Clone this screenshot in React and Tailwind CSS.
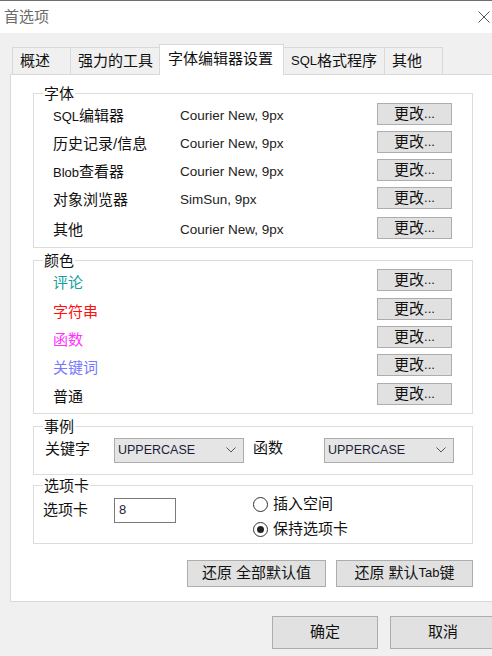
import React from 'react';

const L = ({ children, className = '' }) => <span className={`text-[13px] ${className}`}>{children}</span>;

function Btn({ children, className = '' }) {
  return (
    <div className={`flex items-center justify-center bg-[#e1e1e1] border border-[#adadad] text-[#111] ${className}`}>
      {children}
    </div>
  );
}

function ChangeBtn({ focused }) {
  return (
    <Btn className={`w-[75px] h-[22px] ${focused ? 'border-[#9aa7b6]' : ''}`}>
      更改<L>...</L>
    </Btn>
  );
}

function Group({ title, className = '', children }) {
  return (
    <div className={`relative border border-[#dcdcdc] ${className}`}>
      <span className="absolute left-[9px] top-[-10px] bg-white px-[1px] leading-[20px] text-[#111]">{title}</span>
      {children}
    </div>
  );
}

function Select() {
  return (
    <div className="w-[130px] h-[25px] flex items-center justify-between bg-[#e5e5e5] border border-[#acacac] pl-[3px] pr-[7px]">
      <span className="text-[12.5px] text-[#1b2238]">UPPERCASE</span>
      <svg width="10" height="6" viewBox="0 0 10 6">
        <path d="M0.5 0.5 L5 5 L9.5 0.5" fill="none" stroke="#555" strokeWidth="1" />
      </svg>
    </div>
  );
}

function Radio({ checked, label }) {
  return (
    <div className="h-[25px] flex items-center gap-[5px]">
      <div className="w-[15px] h-[15px] rounded-full border border-[#333] bg-white flex items-center justify-center">
        {checked && <div className="w-[7px] h-[7px] rounded-full bg-[#222]" />}
      </div>
      <span>{label}</span>
    </div>
  );
}

const fonts = [
  { label: <><L>SQL</L>编辑器</>, value: 'Courier New, 9px' },
  { label: <>历史记录/信息</>, value: 'Courier New, 9px' },
  { label: <><L>Blob</L>查看器</>, value: 'Courier New, 9px' },
  { label: <>对象浏览器</>, value: 'SimSun, 9px' },
  { label: <>其他</>, value: 'Courier New, 9px' },
];

const colors = [
  { label: '评论', color: 'text-[#12a0a0]' },
  { label: '字符串', color: 'text-[#ff1010]' },
  { label: '函数', color: 'text-[#ff33ff]' },
  { label: '关键词', color: 'text-[#7878ff]' },
  { label: '普通', color: 'text-[#111]' },
];

const tabs = [
  { label: '概述', w: 'w-[59px]' },
  { label: '强力的工具', w: 'w-[90px]' },
  { label: '字体编辑器设置', w: 'w-[125px]', active: true },
  { label: <><L>SQL</L>格式程序</>, w: 'w-[102px]' },
  { label: '其他', w: 'w-[59px]' },
];

export default function App() {
  return (
    <div className="w-[492px] h-[656px] overflow-hidden bg-[#f0f0f0] text-[15px] text-[#111] font-['Liberation_Sans','Noto_Sans_CJK_SC',sans-serif]">
      {/* title bar */}
      <div className="h-[33px] bg-white border-t border-[#6e6e6e] flex items-center justify-between pl-[4px] pr-[2px]">
        <span className="text-[#6b6b6b]">首选项</span>
        <svg width="12" height="12" viewBox="0 0 12 12">
          <path d="M0.5 0.5 L11.5 11.5 M11.5 0.5 L0.5 11.5" stroke="#555" strokeWidth="1" />
        </svg>
      </div>

      <div className="pl-[10px] pt-[11px]">
        {/* tabs */}
        <div className="flex items-end pl-[2px] h-[30px]">
          {tabs.map((t, i) => (
            <div
              key={i}
              className={`${t.w} ${i > 0 ? '-ml-[1px]' : ''} flex items-center pl-[7px] border-t border-l border-r border-[#d9d9d9] whitespace-nowrap ${
                t.active ? 'relative z-10 h-[31px] -mb-[1px] bg-white pl-[8px] pb-[1px]' : 'h-[27px] bg-[#f0f0f0]'
              }`}
            >
              {t.label}
            </div>
          ))}
        </div>

        {/* panel */}
        <div className="w-[500px] h-[528px] bg-white border border-[#d9d9d9] pl-[22px] pt-[18px]">
          <div className="w-[440px] flex flex-col">
            <Group title="字体" className="pt-[9px] pb-[8px]">
              <div className="flex flex-col">
                {fonts.map((f, i) => (
                  <div key={i} className={`h-[22px] flex items-center pl-[19px] ${i === 0 ? '' : i === 4 ? 'mt-[8px]' : 'mt-[6px]'}`}>
                    <span className="w-[127px] pt-[4px] whitespace-nowrap">{f.label}</span>
                    <span className="w-[197px] pt-[4px] text-[13.5px] text-[#222]">{f.value}</span>
                    <ChangeBtn />
                  </div>
                ))}
              </div>
            </Group>

            <Group title="颜色" className="mt-[12px] pt-[8px] pb-[8px]">
              <div className="flex flex-col">
                {colors.map((c, i) => (
                  <div key={i} className={`h-[22px] flex items-center pl-[19px] ${i === 0 ? '' : i === 1 || i === 4 ? 'mt-[7px]' : 'mt-[6px]'}`}>
                    <span className={`w-[324px] pt-[6px] ${c.color}`}>{c.label}</span>
                    <ChangeBtn focused={i === 0} />
                  </div>
                ))}
              </div>
            </Group>

            <Group title="事例" className="mt-[12px] pt-[10px] pb-[10px]">
              <div className="flex items-center pl-[11px]">
                <span className="w-[69px] pb-[3px]">关键字</span>
                <Select />
                <span className="w-[80px] pl-[9px] pb-[4px]">函数</span>
                <Select />
              </div>
            </Group>

            <Group title="选项卡" className="mt-[10px] pt-[6px] pb-[1px]">
              <div className="flex items-start pl-[9px]">
                <div className="w-[210px] mt-[6px] flex items-center">
                  <span className="w-[71px]">选项卡</span>
                  <div className="w-[62px] h-[25px] bg-white border border-[#7a7a7a] flex items-center pl-[4px]">
                    <span className="text-[13px] text-[#1b2238]">8</span>
                  </div>
                </div>
                <div className="flex flex-col">
                  <Radio label="插入空间" />
                  <Radio checked label="保持选项卡" />
                </div>
              </div>
            </Group>

            <div className="mt-[16px] flex justify-end gap-[10px]">
              <Btn className="w-[139px] h-[27px]">还原 全部默认值</Btn>
              <Btn className="w-[137px] h-[27px]">
                还原 默认<L className="text-[12px]">Tab</L>键
              </Btn>
            </div>
          </div>
        </div>

        {/* bottom buttons */}
        <div className="mt-[14px] flex pl-[262px] gap-[12px]">
          <Btn className="w-[106px] h-[33px] shrink-0">确定</Btn>
          <Btn className="w-[106px] h-[33px] shrink-0">取消</Btn>
        </div>
      </div>
    </div>
  );
}
